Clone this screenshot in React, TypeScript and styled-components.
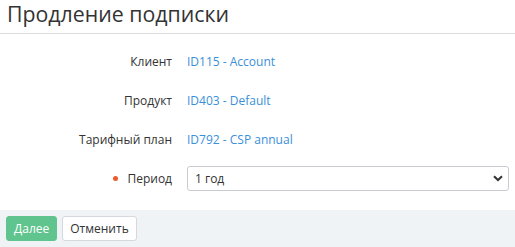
import React from "react";
import styled, { createGlobalStyle } from "styled-components";

const Global = createGlobalStyle`
  html, body { margin: 0; padding: 0; background: #fff; }
  body { font-family: "Open Sans", "Noto Sans", sans-serif; color: #333; }
`;

const Page = styled.div`
  width: 515px;
  height: 247px;
  display: flex;
  flex-direction: column;
`;

const Header = styled.h1`
  margin: 0;
  padding: 0 7px;
  height: 34px;
  box-sizing: border-box;
  font-size: 21.3px;
  font-weight: 400;
  line-height: 28px;
  color: #333;
  border-bottom: 1px solid #ddd;
`;

const Form = styled.div`
  flex: 1;
  display: grid;
  grid-template-columns: 172px 1fr;
  grid-auto-rows: 39px;
  column-gap: 15px;
  padding: 8px 6px 0 0;
  align-items: center;
`;

const Label = styled.div<{ $required?: boolean }>`
  text-align: right;
  font-size: 12px;
  color: #333;
  display: flex;
  justify-content: flex-end;
  align-items: center;
  gap: 9px;
  &::before {
    content: "";
    display: ${(p) => (p.$required ? "block" : "none")};
    width: 5px;
    height: 5px;
    border-radius: 50%;
    background: #ee5a2d;
  }
`;

const Link = styled.a`
  font-size: 12px;
  color: #3a8fd8;
  text-decoration: none;
`;

const SelectWrap = styled.div`
  position: relative;
  height: 25px;
`;

const Select = styled.select`
  appearance: none;
  width: 100%;
  height: 25px;
  box-sizing: border-box;
  border: 1px solid #c8ccd0;
  border-radius: 3px;
  background: #fff;
  font-family: inherit;
  font-size: 12px;
  color: #333;
  padding: 0 7px;
`;

const Chevron = styled.svg`
  position: absolute;
  right: 6px;
  top: 9px;
  pointer-events: none;
`;

const Footer = styled.div`
  height: 37px;
  background: #f0f3f6;
  display: flex;
  align-items: center;
  gap: 5px;
  padding: 0 6px;
`;

const Button = styled.button<{ $primary?: boolean }>`
  height: 25px;
  box-sizing: border-box;
  padding: 0 7px;
  border-radius: 3px;
  font-family: inherit;
  font-size: 12px;
  border: 1px solid ${(p) => (p.$primary ? "#5fc48d" : "#d5d9dd")};
  background: ${(p) => (p.$primary ? "#5fc48d" : "#fff")};
  color: ${(p) => (p.$primary ? "#fff" : "#333")};
`;

export default function App() {
  return (
    <Page>
      <Global />
      <Header>Продление подписки</Header>
      <Form>
        <Label>Клиент</Label>
        <Link href="#">ID115 - Account</Link>
        <Label>Продукт</Label>
        <Link href="#">ID403 - Default</Link>
        <Label>Тарифный план</Label>
        <Link href="#">ID792 - CSP annual</Link>
        <Label $required>Период</Label>
        <SelectWrap>
          <Select defaultValue="1">
            <option value="1">1 год</option>
          </Select>
          <Chevron width="10" height="7" viewBox="0 0 10 7">
            <path d="M1 1.2 L5 5 L9 1.2" fill="none" stroke="#333" strokeWidth="2" />
          </Chevron>
        </SelectWrap>
      </Form>
      <Footer>
        <Button $primary>Далее</Button>
        <Button>Отменить</Button>
      </Footer>
    </Page>
  );
}
